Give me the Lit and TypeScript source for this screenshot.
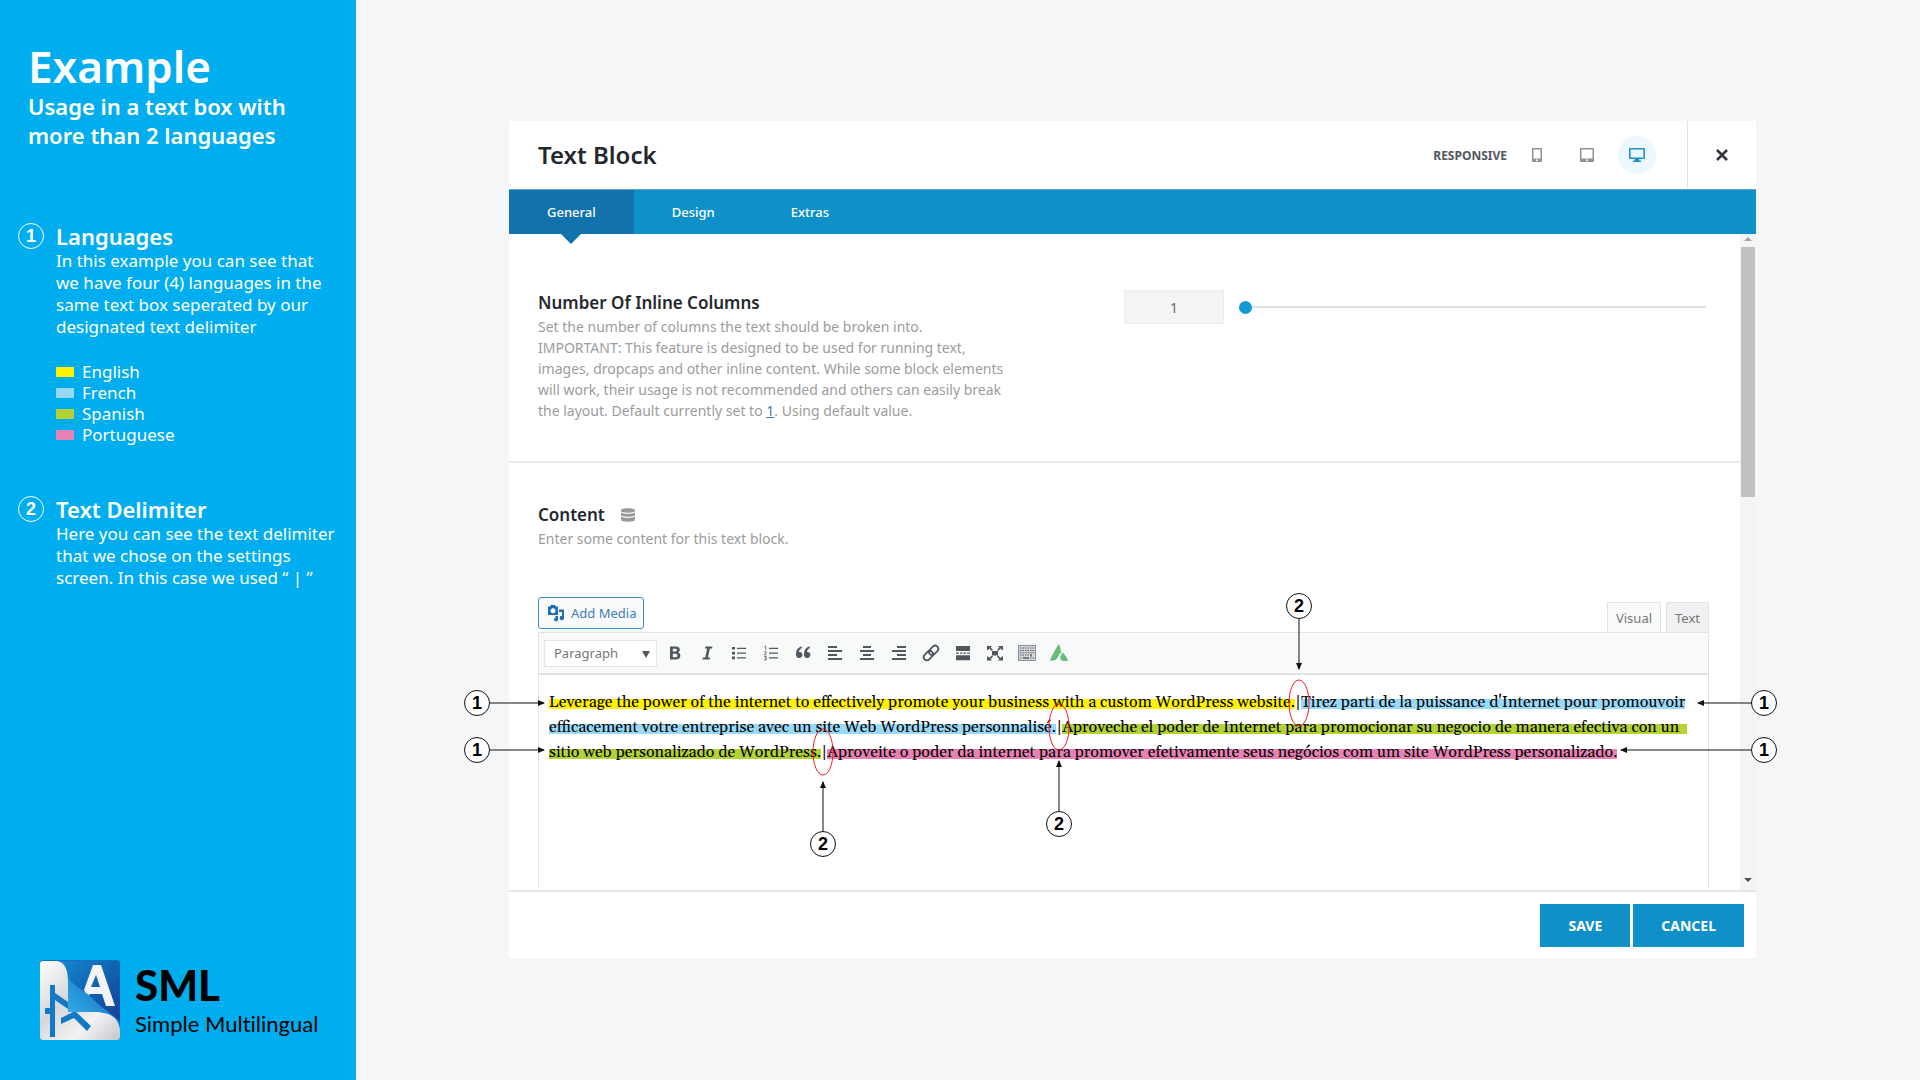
import { LitElement, html, css, svg } from "lit";
import { customElement, state } from "lit/decorators.js";

const LEGEND = [
  { name: "English", tone: "yellow" },
  { name: "French", tone: "blue" },
  { name: "Spanish", tone: "green" },
  { name: "Portuguese", tone: "pink" },
];

const icon = (label: string, body: unknown) => html`
  <button class="tool" type="button" aria-label=${label}>
    <svg viewBox="0 0 20 20" width="20" height="20" aria-hidden="true">${body}</svg>
  </button>
`;

const TOOLS = [
  { label: "Bold", body: svg`<path fill-rule="evenodd" d="M5 3.500h5.600c2.600 0 4.200 1.200 4.200 3.200 0 1.400-.8 2.400-2 2.800 1.600.3 2.600 1.500 2.600 3.200 0 2.400-1.800 3.800-4.600 3.800H5zM7.800 5.700v2.900h2.200c1.200 0 1.900-.5 1.900-1.500S11.300 5.700 10 5.700zM7.800 10.700v3.600h2.600c1.300 0 2-.6 2-1.800s-.8-1.800-2.100-1.800z"/>` },
  { label: "Italic", body: svg`<path d="M8.500 3.500h7l-.4 2h-2.200l-2 9h2.200l-.4 2h-7.200l.4-2h2.300l2-9H8z"/>` },
  { label: "Bulleted list", body: svg`<path d="M3 4h3v2.600H3zM3 8.800h3v2.600H3zM3 13.600h3v2.600H3zM8 4.700h9v1.200H8zM8 9.500h9v1.200H8zM8 14.300h9v1.200H8z"/>` },
  { label: "Numbered list", body: svg`<path d="M8 4.700h9v1.200H8zM8 9.500h9v1.200H8zM8 14.300h9v1.200H8z"/><path d="M3.400 3.800l1.300-.8v4M3.200 8.700h2v1.500l-2 1.700h2.300M3.200 13.500h2v3.500h-2M3.800 15.200h1.400" fill="none" stroke="currentColor" stroke-width=".8"/>` },
  { label: "Blockquote", body: svg`<path d="M9 5.200C6.800 5.800 6.100 7.300 6 9c2-.3 3.400 1 3.400 2.800S8.100 15 6.100 15C3.800 15 2.900 13.200 3 11c.1-4 2-6.800 5.600-7.500zM17 5.200c-2.200.6-2.900 2.100-3 3.800 2-.3 3.400 1 3.400 2.800S16.100 15 14.100 15c-2.300 0-3.200-1.800-3.100-4 .1-4 2-6.800 5.600-7.500z"/>` },
  { label: "Align left", body: svg`<path d="M3 3h9v2H3zM3 7h14v2H3zM3 11h9v2H3zM3 15h14v2H3z"/>` },
  { label: "Align center", body: svg`<path d="M6 3h8v2H6zM3 7h14v2H3zM6 11h8v2H6zM3 15h14v2H3z"/>` },
  { label: "Align right", body: svg`<path d="M8 3h9v2H8zM3 7h14v2H3zM8 11h9v2H8zM3 15h14v2H3z"/>` },
  { label: "Insert link", body: svg`<g fill="none" stroke="currentColor" stroke-width="1.800" transform="rotate(-45 10 10)"><rect x="1" y="6.800" width="10.500" height="6.400" rx="3.200"/><rect x="8.500" y="6.800" width="10.500" height="6.400" rx="3.200"/></g>` },
  { label: "Read more", body: svg`<path d="M3 3h14v5H3zM3 9.400h3v1.400H3zM7 9.400h2.500v1.400H7zM10.500 9.400H13v1.400h-2.500zM14 9.400h3v1.400h-3zM3 12.200h14v5H3z"/>` },
  { label: "Full screen", body: svg`<path d="M7 8h6v4.500H7zM2 3h5L5.600 4.400 8 6.800 6.800 8 4.400 5.600 3 7H2zM18 3h-5l1.400 1.400L12 6.800 13.200 8l2.400-2.400L17 7h1zM2 17.500h5l-1.400-1.400L8 13.700l-1.200-1.200-2.400 2.400L3 13.500H2zM18 17.500h-5l1.400-1.400-2.400-2.400 1.200-1.200 2.400 2.400 1.400-1.400h1z"/>` },
  { label: "Toolbar toggle", body: svg`<rect x="1.500" y="2.500" width="17" height="15" fill="#d5d8de" stroke="#8a909a"/><path d="M3 5h14M3 7.500h14M3 12h9M3 15h2M13 15h4" stroke="currentColor" stroke-width="1.200" stroke-dasharray="1.500 1" fill="none"/><path d="M6 15h6M14 11v2.500" stroke="currentColor" stroke-width="1.400"/><path d="M2 9.700h16" stroke="#8a909a"/>` },
  { label: "Avada shortcodes", body: svg`<path fill="#65bc7b" d="M10 1C7.500 4.500 3 12 1 17.800c4.500.4 6.800-1.500 8.400-4.600.8-1.600 1.600-2.800 2.800-3.900C11.800 6.500 11.200 3.500 10 1zM14 9.800c-1.600 1-2.400 2.600-2.700 4.300-.3 1.900.6 3.500 2.600 3.800 1.700.2 3.500.1 5.100-.1-.9-3-2.800-6-5-8z"/>` },
];

@customElement("text-callouts")
class TextCallouts extends LitElement {
  static styles = css`
    :host { display: block; }
    .canvas { display: block; width: 100%; height: auto; overflow: visible; }
    .line { stroke: #111; stroke-width: 1; fill: none; }
    .disc { fill: #fff; stroke: #111; stroke-width: 1; }
    .num { font: 700 18px "Liberation Sans", sans-serif; text-anchor: middle; fill: #000; }
    .ring { fill: none; stroke: #ed1c24; stroke-width: 1; }
  `;

  private marks = [
    { n: 1, x: 477, y: 703, tx: 544, ty: 703 },
    { n: 1, x: 477, y: 750, tx: 544, ty: 750 },
    { n: 1, x: 1764, y: 703, tx: 1698, ty: 703 },
    { n: 1, x: 1764, y: 750, tx: 1621, ty: 750 },
    { n: 2, x: 1299, y: 606, tx: 1299, ty: 669 },
    { n: 2, x: 1059, y: 824, tx: 1059, ty: 761 },
    { n: 2, x: 823, y: 844, tx: 823, ty: 782 },
  ];

  private rings = [[1299, 703], [1059, 727], [823, 752]];

  render() {
    return html`
      <svg class="canvas" viewBox="460 590 1330 270" role="img" aria-label="Callouts">
        <defs>
          <marker id="tip" markerWidth="7" markerHeight="6" refX="6" refY="3" orient="auto" markerUnits="userSpaceOnUse">
            <path d="M0 0L7 3L0 6z" fill="#111" />
          </marker>
        </defs>
        ${this.rings.map(([x, y]) => svg`<ellipse class="ring" cx=${x} cy=${y} rx="10" ry="23" />`)}
        ${this.marks.map((m) => svg`
          <line class="line" x1=${m.x} y1=${m.y} x2=${m.tx} y2=${m.ty} marker-end="url(#tip)" />
          <circle class="disc" cx=${m.x} cy=${m.y} r="12.500" />
          <text class="num" x=${m.x} y=${m.y + 6}>${m.n}</text>
        `)}
      </svg>
    `;
  }
}

@customElement("app-root")
class AppRoot extends LitElement {
  @state() private tab = "General";

  static styles = css`
    :host {
      display: flex;
      min-height: 100vh;
      background: #f4f6f8;
      font-family: "Noto Sans", "Open Sans", sans-serif;
      color: #23282d;
    }
    * { box-sizing: border-box; }
    h1, h2, h3, p, ul { margin: 0; padding: 0; }
    button { font: inherit; border: 0; background: none; padding: 0; cursor: pointer; color: inherit; }

    .side {
      flex: 0 0 356px;
      min-width: 0;
      display: flex;
      flex-direction: column;
      background: #00aeef;
      color: #fff;
      padding: 40px 16px 40px 18px;
    }
    .intro { padding-left: 10px; margin-bottom: 72px; }
    .intro-title { font-size: 44px; line-height: 52px; font-weight: 600; }
    .intro-sub { font-size: 22px; line-height: 29px; font-weight: 600; }
    .note { display: grid; grid-template-columns: 26px 1fr; column-gap: 12px; margin-bottom: 50px; }
    .note-num {
      width: 26px; height: 26px; margin-top: 1px; border: 1px solid #fff; border-radius: 50%;
      display: grid; place-items: center;
      font: 700 18px/24px "Liberation Sans", sans-serif;
    }
    .note-title { font-size: 22px; line-height: 28px; font-weight: 600; }
    .note-text { font-size: 17px; line-height: 22px; white-space: nowrap; }
    .legend { list-style: none; margin-top: 23px; }
    .legend-row { display: flex; align-items: center; gap: 8px; font-size: 17px; line-height: 21px; }
    .swatch { width: 18px; height: 10px; }
    .swatch.yellow { background: #fff200; }
    .swatch.blue { background: #99d9f8; }
    .swatch.green { background: #b2d235; }
    .swatch.pink { background: #e881b4; }
    .brand { margin-top: auto; padding-left: 22px; display: flex; gap: 15px; align-items: center; color: #000; }
    .brand-name { font: 900 42px/48px "Lato", "Noto Sans", sans-serif; }
    .brand-full { font: 400 22px/30px "Lato", "Noto Sans", sans-serif; font-variant-ligatures: none; white-space: nowrap; }

    .main { flex: 1; min-width: 0; padding: 121px 164px 122px 153px; }
    .modal { position: relative; background: #fff; }
    .head { display: flex; align-items: center; height: 68px; padding-left: 29px; }
    .head-title { flex: 1; font-size: 24px; line-height: 30px; font-weight: 600; }
    .resp-label { font-size: 12px; font-weight: 700; color: #50575e; margin-right: 11px; }
    .device { width: 38px; height: 38px; margin-right: 12px; border-radius: 50%; display: grid; place-items: center; color: #8c929b; }
    .device.on { background: #edf7fe; color: #1b8fc9; margin-right: 31px; }
    .close { width: 69px; align-self: stretch; border-left: 1px solid #dfe1e3; display: grid; place-items: center; color: #32373c; }

    .tabs { display: flex; height: 45px; background: #0f90c9; border-top: 1px solid #62a5c9; }
    .tab { position: relative; padding: 0 38px; font-size: 13px; font-weight: 500; color: #fff; }
    .tab.on { background: #1272ab; }
    .tab.on::after {
      content: ""; position: absolute; top: 100%; left: 50%; margin-left: -10px;
      border: 10px solid transparent; border-top-color: #1272ab; border-bottom: 0;
    }

    .body { display: flex; border-bottom: 2px solid #e4e5e6; }
    .panes { flex: 1; min-width: 0; padding-bottom: 3px; }
    .bar { width: 16px; background: #f3f4f5; display: flex; flex-direction: column; align-items: center; padding: 3px 1px 8px; }
    .bar-up { border: 4px solid transparent; border-top: 0; border-bottom-color: #a3a3a3; }
    .bar-thumb { width: 14px; height: 250px; margin: 6px 0 auto; background: #c1c1c1; }
    .bar-down { border: 4px solid transparent; border-bottom: 0; border-top-color: #505050; }

    .option { display: flex; gap: 116px; padding: 56px 34px 40px 29px; border-bottom: 2px solid #e9eaeb; }
    .option-info { flex: 0 0 470px; }
    .option-title { font-size: 17px; line-height: 26px; font-weight: 600; }
    .option-text { font-size: 14px; line-height: 21px; color: #9c9c9c; white-space: nowrap; }
    .default { color: #3a7fb8; }
    .range { flex: 1; display: flex; align-items: center; gap: 15px; height: 34px; }
    .range-box {
      width: 100px; height: 34px; border: 1px solid #ececec; background: #f4f4f4;
      text-align: center; font: 14px "Noto Sans", sans-serif; color: #666;
    }
    .slider { flex: 1; appearance: none; height: 14px; margin: 0; background: linear-gradient(#dedede, #dedede) center / 100% 2px no-repeat; }
    .slider::-webkit-slider-thumb { appearance: none; width: 13px; height: 13px; border-radius: 50%; background: #129bd6; }

    .content { padding: 39px 31px 0 29px; }
    .content-head { display: flex; align-items: center; gap: 16px; }
    .media-row { display: flex; align-items: flex-end; justify-content: space-between; margin-top: 47px; height: 36px; }
    .media {
      display: flex; align-items: center; gap: 5px; height: 32px; margin-bottom: 3px; padding: 0 7px;
      border: 1px solid #3d8bc4; border-radius: 3px; background: #f8fafb; color: #3f7cb4; font-size: 13px;
    }
    .modes { display: flex; gap: 5px; }
    .mode { height: 30px; padding: 0 8px; border: 1px solid #e1e2e4; border-bottom: 0; background: #f1f1f3; color: #777; font-size: 13px; }
    .mode.on { background: #f8fafa; margin-bottom: -1px; position: relative; }
    .editor { border: 1px solid #e1e2e4; border-bottom: 0; }
    .tools { display: flex; align-items: center; height: 42px; padding-left: 5px; background: #f8fafa; border-bottom: 2px solid #e1e2e4; color: #50575e; }
    .format { position: relative; margin-right: 2px; }
    .format-box {
      appearance: none; display: block; width: 113px; height: 27px; padding: 0 9px; border: 1px solid #e4e5e7;
      background: #fff; font: 13px "Noto Sans", sans-serif; color: #777; border-radius: 0;
    }
    .format::after {
      content: ""; position: absolute; right: 7px; top: 11px; pointer-events: none;
      border: 4px solid transparent; border-top: 7px solid #50575e; border-bottom: 0;
    }
    .tool { width: 32px; height: 28px; display: grid; place-items: center; }
    .tool svg { fill: currentColor; }
    .text { padding: 15px 10px; height: 212px; outline: 0; color: #000; font: 16px/25px "Gelasio", "Georgia", "Liberation Serif", serif; white-space: nowrap; }
    .hl { background-repeat: no-repeat; background-position: 0 7px; background-size: 100% 10px; }
    .hl.yellow { background-image: linear-gradient(#fff200, #fff200); }
    .hl.blue { background-image: linear-gradient(#99d9f8, #99d9f8); }
    .hl.green { background-image: linear-gradient(#b2d235, #b2d235); }
    .hl.pink { background-image: linear-gradient(#e881b4, #e881b4); }
    .hl.trail { padding-right: 8px; }

    .foot { display: flex; justify-content: flex-end; gap: 3px; padding: 12px 12px 11px; }
    .action { height: 43px; padding: 0 28px; background: #0f90c9; color: #fff; font-size: 14px; font-weight: 700; }
    .callouts { position: absolute; left: -49px; right: -34px; top: 469px; pointer-events: none; }
  `;

  private logo() {
    return html`
      <svg viewBox="0 0 80 80" width="80" height="80" role="img" aria-label="SML logo">
        <defs>
          <linearGradient id="paper" x1="0" y1="0" x2="1" y2="1">
            <stop offset="0" stop-color="#fff" /><stop offset=".4" stop-color="#d5d7db" /><stop offset=".7" stop-color="#f3f3f5" /><stop offset="1" stop-color="#c4c6ca" />
          </linearGradient>
          <linearGradient id="deep" x1="0" y1="0" x2="1" y2="1">
            <stop offset="0" stop-color="#1488d0" /><stop offset=".5" stop-color="#1062b0" /><stop offset="1" stop-color="#173f95" />
          </linearGradient>
          <linearGradient id="fold" x1="0" y1="1" x2=".7" y2=".3">
            <stop offset="0" stop-color="#35b6ee" /><stop offset="1" stop-color="#1a78c8" />
          </linearGradient>
        </defs>
        <rect width="80" height="80" rx="3" fill="#126fbd" />
        <path d="M18 1H77a3 3 0 0 1 3 3V62C74 54 66 52 56 52L28 24C27 12 26 5 18 1z" fill="url(#deep)" />
        <path fill-rule="evenodd" fill="#f2f3f6" d="M53 5H61L75 46H66L62 34H50L47 38L44 30zM56 15L51 27H60z" />
        <path d="M3 1H17C25 2 28 10 28 22V52H58C70 53 78 57 80 69V77a3 3 0 0 1-3 3H3a3 3 0 0 1-3-3V4a3 3 0 0 1 3-3z" fill="url(#paper)" />
        <path d="M10 25H15V77H10zM5 48H10V54H5zM15 33L28 42V49L15 40zM21 58L35 51L51 66L47 71L34 58L21 64z" fill="#1479c4" />
        <path d="M28 13C29 26 45 29 54 40C62 49 72 52 79 63C73 54 66 52 56 52H28z" fill="url(#fold)" />
      </svg>
    `;
  }

  render() {
    return html`
      <aside class="side">
        <header class="intro">
          <h1 class="intro-title">Example</h1>
          <p class="intro-sub">Usage in a text box with<br />more than 2 languages</p>
        </header>
        <section class="note">
          <span class="note-num">1</span>
          <div>
            <h2 class="note-title">Languages</h2>
            <p class="note-text">In this example you can see that<br />we have four (4) languages in the<br />same text box seperated by our<br />designated text delimiter</p>
            <ul class="legend">
              ${LEGEND.map((l) => html`<li class="legend-row"><span class="swatch ${l.tone}"></span>${l.name}</li>`)}
            </ul>
          </div>
        </section>
        <section class="note">
          <span class="note-num">2</span>
          <div>
            <h2 class="note-title">Text Delimiter</h2>
            <p class="note-text">Here you can see the text delimiter<br />that we chose on the settings<br />screen. In this case we used “ | ”</p>
          </div>
        </section>
        <footer class="brand">
          ${this.logo()}
          <div>
            <div class="brand-name">SML</div>
            <div class="brand-full">Simple Multilingual</div>
          </div>
        </footer>
      </aside>

      <main class="main">
        <div class="modal">
          <header class="head">
            <h2 class="head-title">Text Block</h2>
            <span class="resp-label">RESPONSIVE</span>
            <button class="device" type="button" aria-label="Phone">
              <svg width="10" height="16" viewBox="0 0 10 16" fill="currentColor"><path fill-rule="evenodd" d="M1 1h8a1 1 0 0 1 1 1v12a1 1 0 0 1-1 1H1a1 1 0 0 1-1-1V2a1 1 0 0 1 1-1zM1.500 2.500v9h7v-9zM5 12.300a1 1 0 1 0 .01 0z" /></svg>
            </button>
            <button class="device" type="button" aria-label="Tablet">
              <svg width="14" height="16" viewBox="0 0 14 16" fill="currentColor"><path fill-rule="evenodd" d="M1 1h12a1 1 0 0 1 1 1v12a1 1 0 0 1-1 1H1a1 1 0 0 1-1-1V2a1 1 0 0 1 1-1zM1.500 2.500v9h11v-9zM7 12.300a1 1 0 1 0 .01 0z" /></svg>
            </button>
            <button class="device on" type="button" aria-label="Desktop">
              <svg width="16" height="16" viewBox="0 0 16 16" fill="currentColor"><path fill-rule="evenodd" d="M1 1h14a1 1 0 0 1 1 1v9a1 1 0 0 1-1 1h-5l.3 1.600H12V15H4v-1.400h1.700L6 12H1a1 1 0 0 1-1-1V2a1 1 0 0 1 1-1zM1.600 2.600v7.800h12.800V2.600z" /></svg>
            </button>
            <button class="close" type="button" aria-label="Close">
              <svg width="12" height="12" viewBox="0 0 12 12" stroke="currentColor" stroke-width="2.600"><path d="M1 1L11 11M11 1L1 11" /></svg>
            </button>
          </header>
          <nav class="tabs">
            ${["General", "Design", "Extras"].map((t) => html`
              <button type="button" class="tab ${this.tab === t ? "on" : ""}" @click=${() => (this.tab = t)}>${t}</button>
            `)}
          </nav>
          <div class="body">
            <div class="panes">
              <section class="option">
                <div class="option-info">
                  <h3 class="option-title"><label for="cols">Number Of Inline Columns</label></h3>
                  <p class="option-text">Set the number of columns the text should be broken into.<br />IMPORTANT: This feature is designed to be used for running text,<br />images, dropcaps and other inline content. While some block elements<br />will work, their usage is not recommended and others can easily break<br />the layout. Default currently set to <a class="default" href="#">1</a>. Using default value.</p>
                </div>
                <div class="range">
                  <input class="range-box" id="cols" type="text" value="1" />
                  <input class="slider" type="range" min="1" max="6" value="1" aria-label="Number Of Inline Columns" />
                </div>
              </section>
              <section class="content">
                <div class="content-head">
                  <h3 class="option-title">Content</h3>
                  <svg width="14" height="16" viewBox="0 0 14 16" fill="#999" aria-hidden="true"><path d="M0 3C0 .5 14 .5 14 3v1C14 6.300 0 6.300 0 4zM0 5.600c2 1.800 12 1.800 14 0V8C14 10.300 0 10.300 0 8zM0 9.600c2 1.800 12 1.800 14 0v3.200c0 2.600-14 2.600-14 0z" /></svg>
                </div>
                <p class="option-text">Enter some content for this text block.</p>
                <div class="media-row">
                  <button class="media" type="button">
                    <svg width="20" height="20" viewBox="0 0 20 20" fill="#1d6fb5" aria-hidden="true"><path fill-rule="evenodd" d="M2 3.500h2L5 2h4l1 1.500h2V12H2zM7 5.200a2.500 2.500 0 1 0 .01 0z" /><path d="M13 6.500h5V15a2.200 2.200 0 1 1-2-2.200V9h-3zM9 13h3v3.500a2 2 0 1 1-2-2z" /></svg>
                    Add Media
                  </button>
                  <div class="modes">
                    <button class="mode on" type="button">Visual</button>
                    <button class="mode" type="button">Text</button>
                  </div>
                </div>
                <div class="editor">
                  <div class="tools">
                    <div class="format">
                      <select class="format-box" aria-label="Text format"><option>Paragraph</option></select>
                    </div>
                    ${TOOLS.map((t) => icon(t.label, t.body))}
                  </div>
                  <div class="text" role="textbox" aria-label="Content" aria-multiline="true" tabindex="0"><span class="hl yellow">Leverage the power of the internet to effectively promote your business with a custom WordPress website.</span>|<span class="hl blue">Tirez parti de la puissance d'Internet pour promouvoir</span><br /><span class="hl blue">efficacement votre entreprise avec un site Web WordPress personnalisé.</span>|<span class="hl green trail">Aproveche el poder de Internet para promocionar su negocio de manera efectiva con un</span><br /><span class="hl green">sitio web personalizado de WordPress.</span>|<span class="hl pink">Aproveite o poder da internet para promover efetivamente seus negócios com um site WordPress personalizado.</span></div>
                </div>
              </section>
            </div>
            <div class="bar" aria-hidden="true">
              <span class="bar-up"></span><span class="bar-thumb"></span><span class="bar-down"></span>
            </div>
          </div>
          <footer class="foot">
            <button class="action" type="button">SAVE</button>
            <button class="action" type="button">CANCEL</button>
          </footer>
          <text-callouts class="callouts"></text-callouts>
        </div>
      </main>
    `;
  }
}
